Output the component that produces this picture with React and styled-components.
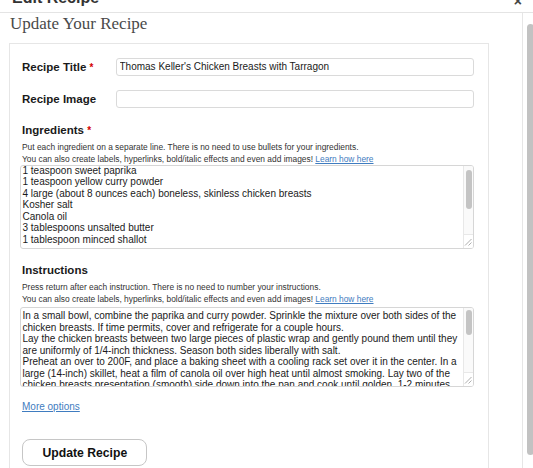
import React from 'react';
import styled, { createGlobalStyle } from 'styled-components';

const GlobalStyle = createGlobalStyle`
  * { box-sizing: border-box; }
  html, body { margin: 0; padding: 0; background: #fff; }
  body {
    font-family: 'Liberation Sans', Arial, Helvetica, sans-serif;
    color: #1c1c1c;
    overflow: hidden;
  }
`;

const ingredients = `1 teaspoon sweet paprika
1 teaspoon yellow curry powder
4 large (about 8 ounces each) boneless, skinless chicken breasts
Kosher salt
Canola oil
3 tablespoons unsalted butter
1 tablespoon minced shallot`;

const instructions = `In a small bowl, combine the paprika and curry powder. Sprinkle the mixture over both sides of the chicken breasts. If time permits, cover and refrigerate for a couple hours.
Lay the chicken breasts between two large pieces of plastic wrap and gently pound them until they are uniformly of 1/4-inch thickness. Season both sides liberally with salt.
Preheat an over to 200F, and place a baking sheet with a cooling rack set over it in the center. In a large (14-inch) skillet, heat a film of canola oil over high heat until almost smoking. Lay two of the chicken breasts presentation (smooth) side down into the pan and cook until golden, 1-2 minutes.`;

const Modal = styled.div`
  width: 533px;
  height: 468px;
  display: flex;
  flex-direction: column;
  overflow: hidden;
  background: #fff;
`;

const Header = styled.div`
  flex-shrink: 0;
  height: 29px;
  margin-top: -16px;
  display: flex;
  align-items: center;
  justify-content: space-between;
  padding: 0 11px 0 12px;
  border-bottom: 1px solid #e4e4e4;
  font-size: 16px;
  font-weight: bold;
  color: #333;
`;

const Close = styled.span`
  margin-top: 5px;
  font-size: 14px;
  color: #444;
`;

const Body = styled.div`
  flex: 1;
  min-height: 0;
  display: flex;
`;

const Main = styled.div`
  flex: 1;
  padding-top: 1px;
  overflow: hidden;
`;

const Title = styled.h2`
  margin: 0 0 9px 10px;
  font-family: 'Liberation Serif', 'Times New Roman', serif;
  font-size: 17px;
  line-height: 20px;
  font-weight: normal;
  color: #4a4a4a;
`;

const Panel = styled.div`
  width: 480px;
  margin-left: 9px;
  border: 1px solid #e6e6e6;
  padding: 13.5px 14px 24px 10px;
`;

const Row = styled.div`
  display: flex;
  align-items: center;
  & + & { margin-top: 14px; }
`;

const RowLabel = styled.label`
  width: 95.5px;
  padding-left: 2px;
  font-size: 11.5px;
  font-weight: bold;
  color: #1a1a1a;
`;

const TextInput = styled.input`
  flex: 1;
  height: 18px;
  border: 1px solid #dadada;
  border-radius: 3px;
  padding: 0 3px;
  font-family: inherit;
  font-size: 10px;
  color: #1a1a1a;
  outline: none;
`;

const Section = styled.div`
  margin-top: ${(p) => p.$top}px;
`;

const FieldLabel = styled.div`
  padding-left: 2px;
  font-size: 11.5px;
  line-height: 14px;
  font-weight: bold;
  color: #1a1a1a;
`;

const Req = styled.span`
  color: #d40000;
  font-size: 10px;
`;

const Hints = styled.div`
  margin: ${(p) => p.$mt}px 0 ${(p) => p.$mb}px;
  padding-left: 2px;
  font-size: 8.4px;
  line-height: 12px;
  color: #333;
`;

const Link = styled.a`
  color: #3f7cc0;
  text-decoration: underline;
`;

const TextBox = styled.div`
  position: relative;
  display: flex;
  height: ${(p) => p.$h}px;
  border: 1px solid #d6d6d6;
  border-radius: 3px;
  overflow: hidden;
  background: #fff;
`;

const TextBody = styled.div`
  flex: 1;
  overflow: hidden;
  padding: 2px 0 0 1.5px;
  font-size: 10px;
  line-height: 11.5px;
  color: #1a1a1a;
  white-space: pre-wrap;
`;

const Lines = styled.div`
  margin-top: ${(p) => -p.$scroll}px;
`;

const Track = styled.div`
  width: 10px;
  display: flex;
  flex-direction: column;
  border-left: 1px solid #e8e8e8;
  background: #fafafa;
`;

const Thumb = styled.div`
  width: 6.5px;
  height: ${(p) => p.$h}px;
  margin: ${(p) => p.$top}px 0 0 1.5px;
  border-radius: 4px;
  background: #c4c4c4;
`;

const Corner = styled.div`
  margin-top: auto;
  height: 14px;
  display: flex;
  align-items: flex-end;
  justify-content: flex-end;
  padding: 0 1px 2px 0;
  border-top: 1px solid #e8e8e8;
  background: #fff;
`;

const MoreLink = styled(Link)`
  display: block;
  margin-top: 13px;
  padding-left: 2px;
  font-size: 10px;
  line-height: 14px;
`;

const Button = styled.button`
  display: block;
  margin: 25px 0 0 2.4px;
  width: 125px;
  height: 27px;
  border: 1px solid #c6c6c6;
  border-radius: 8px;
  background: #fff;
  font-family: inherit;
  font-size: 12.2px;
  font-weight: bold;
  color: #111;
`;

const PageTrack = styled.div`
  width: 11px;
  flex-shrink: 0;
  border-left: 1px solid #e6e6e6;
  padding: 11px 0 0 4px;
`;

const PageThumb = styled.div`
  width: 7px;
  height: 431px;
  border-radius: 4px;
  background: #c2c2c2;
`;

const Grip = () => (
  <svg width="8" height="8" viewBox="0 0 8 8">
    <path d="M7.5 1 L1 7.5 M7.5 4.5 L4.5 7.5" stroke="#9a9a9a" strokeWidth="0.8" fill="none" />
  </svg>
);

const ScrollText = ({ text, height, scroll, thumbTop, thumbHeight }) => (
  <TextBox $h={height}>
    <TextBody>
      <Lines $scroll={scroll}>{text}</Lines>
    </TextBody>
    <Track>
      <Thumb $top={thumbTop} $h={thumbHeight} />
      <Corner>
        <Grip />
      </Corner>
    </Track>
  </TextBox>
);

const App = () => {
  return (
    <>
      <GlobalStyle />
      <Modal>
        <Header>
          <span>Edit Recipe</span>
          <Close>×</Close>
        </Header>
        <Body>
          <Main>
            <Title>Update Your Recipe</Title>
            <Panel>
              <Row>
                <RowLabel>
                  Recipe Title <Req>*</Req>
                </RowLabel>
                <TextInput readOnly value="Thomas Keller's Chicken Breasts with Tarragon" />
              </Row>
              <Row>
                <RowLabel>Recipe Image</RowLabel>
                <TextInput readOnly value="" />
              </Row>

              <Section $top={15.5}>
                <FieldLabel>
                  Ingredients <Req>*</Req>
                </FieldLabel>
                <Hints $mt={3} $mb={0}>
                  Put each ingredient on a separate line. There is no need to use bullets for your ingredients.
                  <br />
                  You can also create labels, hyperlinks, bold/italic effects and even add images!{' '}
                  <Link>Learn how here</Link>
                </Hints>
                <ScrollText text={ingredients} height={84} scroll={3.5} thumbTop={4} thumbHeight={39} />
              </Section>

              <Section $top={14}>
                <FieldLabel>Instructions</FieldLabel>
                <Hints $mt={4} $mb={2}>
                  Press return after each instruction. There is no need to number your instructions.
                  <br />
                  You can also create labels, hyperlinks, bold/italic effects and even add images!{' '}
                  <Link>Learn how here</Link>
                </Hints>
                <ScrollText text={instructions} height={80} scroll={0} thumbTop={2} thumbHeight={25} />
              </Section>

              <MoreLink>More options</MoreLink>
              <Button>Update Recipe</Button>
            </Panel>
          </Main>
          <PageTrack>
            <PageThumb />
          </PageTrack>
        </Body>
      </Modal>
    </>
  );
};

export default App;
